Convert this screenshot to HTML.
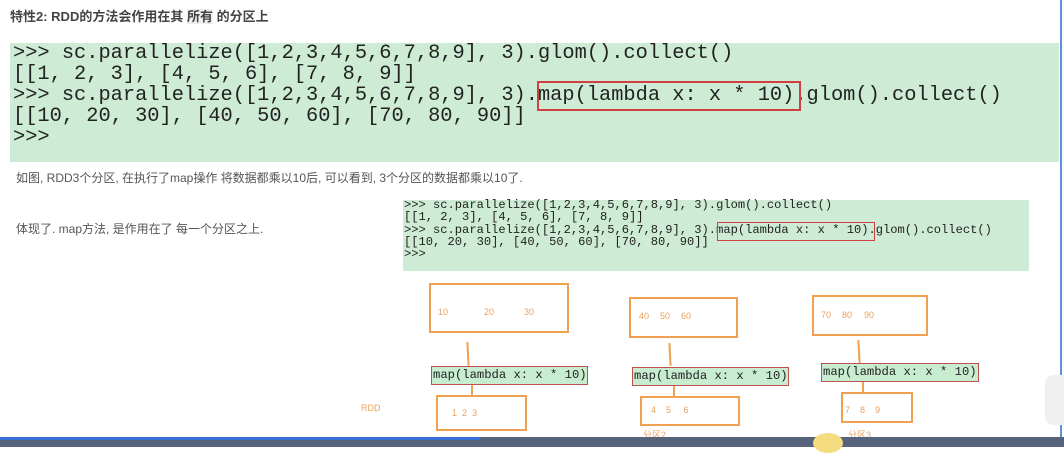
<!DOCTYPE html><html><head><meta charset="utf-8"><style>
body{margin:0;width:1064px;height:447px;background:#fff;position:relative;overflow:hidden;font-family:"Liberation Sans","Noto Sans CJK SC",sans-serif}
.a{position:absolute}
.mono{font-family:"Liberation Mono","DejaVu Sans Mono",monospace;white-space:pre;color:#222}
.ob{position:absolute;border:2px solid #f0a050;box-sizing:border-box;color:#e8a060;font-size:9px}
.mp{position:absolute;background:#c8ecd0;border:1.5px solid #c05050;font-family:"Liberation Mono",monospace;font-size:12.2px;color:#222;white-space:pre;box-sizing:border-box;line-height:16px;padding-left:1px}
.ln{position:absolute;width:2px;background:#f0a050}
.n{position:absolute;font-size:9px;color:#e8a060}
</style></head><body>
<div class="a" style="left:10px;top:6px;font-size:13px;font-weight:bold;color:#444">特性2: RDD的方法会作用在其 <span style="background:#eee">所有</span> 的分区上</div>
<div class="a" style="left:10px;top:43px;width:1049px;height:119px;background:#cdebd5"></div>
<div class="a mono" style="left:13px;top:43px;font-size:20.35px;line-height:21px">&gt;&gt;&gt; sc.parallelize([1,2,3,4,5,6,7,8,9], 3).glom().collect()
[[1, 2, 3], [4, 5, 6], [7, 8, 9]]
&gt;&gt;&gt; sc.parallelize([1,2,3,4,5,6,7,8,9], 3).map(lambda x: x * 10).glom().collect()
[[10, 20, 30], [40, 50, 60], [70, 80, 90]]
&gt;&gt;&gt;</div>
<div class="a" style="left:537px;top:81px;width:264px;height:30px;border:2px solid #d04040;box-sizing:border-box"></div>
<div class="a" style="left:16px;top:169px;font-size:12px;color:#555">如图, RDD3个分区, 在执行了map操作 将数据都乘以10后, 可以看到, 3个分区的数据都乘以10了.</div>
<div class="a" style="left:16px;top:220px;font-size:12px;color:#555">体现了. map方法, 是作用在了 每一个分区之上.</div>
<div class="a" style="left:403px;top:200px;width:626px;height:71px;background:#cdebd5"></div>
<div class="a mono" style="left:404px;top:199px;font-size:12.1px;line-height:12.3px">&gt;&gt;&gt; sc.parallelize([1,2,3,4,5,6,7,8,9], 3).glom().collect()
[[1, 2, 3], [4, 5, 6], [7, 8, 9]]
&gt;&gt;&gt; sc.parallelize([1,2,3,4,5,6,7,8,9], 3).map(lambda x: x * 10).glom().collect()
[[10, 20, 30], [40, 50, 60], [70, 80, 90]]
&gt;&gt;&gt;</div>
<div class="a" style="left:717px;top:222px;width:158px;height:19px;border:1.5px solid #d04040;box-sizing:border-box"></div>

<div class="ob" style="left:429px;top:283px;width:140px;height:50px"></div>
<span class="n" style="left:438px;top:307px">10</span><span class="n" style="left:484px;top:307px">20</span><span class="n" style="left:524px;top:307px">30</span>
<div class="ob" style="left:629px;top:297px;width:109px;height:41px"></div>
<span class="n" style="left:639px;top:311px">40</span><span class="n" style="left:660px;top:311px">50</span><span class="n" style="left:681px;top:311px">60</span>
<div class="ob" style="left:812px;top:295px;width:116px;height:41px"></div>
<span class="n" style="left:821px;top:310px">70</span><span class="n" style="left:842px;top:310px">80</span><span class="n" style="left:864px;top:310px">90</span>
<div class="ln" style="left:467px;top:342px;height:24px;transform:rotate(-3deg)"></div>
<div class="ln" style="left:669px;top:343px;height:23px;transform:rotate(-3deg)"></div>
<div class="ln" style="left:858px;top:340px;height:23px;transform:rotate(-3deg)"></div>
<div class="mp" style="left:431px;top:366px;width:157px;height:19px">map(lambda x: x * 10)</div>
<div class="mp" style="left:632px;top:367px;width:157px;height:19px">map(lambda x: x * 10)</div>
<div class="mp" style="left:821px;top:363px;width:158px;height:19px">map(lambda x: x * 10)</div>
<div class="ln" style="left:471px;top:385px;height:10px"></div>
<div class="ln" style="left:673px;top:386px;height:10px"></div>
<div class="ln" style="left:862px;top:382px;height:10px"></div>
<div class="ob" style="left:436px;top:395px;width:91px;height:36px"></div>
<span class="n" style="left:452px;top:408px">1 &nbsp;2 &nbsp;3</span>
<div class="ob" style="left:640px;top:396px;width:100px;height:30px"></div>
<span class="n" style="left:651px;top:405px">4 &nbsp; &nbsp;5 &nbsp; &nbsp; 6</span>
<div class="ob" style="left:841px;top:392px;width:72px;height:31px"></div>
<span class="n" style="left:845px;top:405px">7 &nbsp; &nbsp;8 &nbsp; &nbsp;9</span>
<div class="n" style="left:361px;top:403px">RDD</div>
<div class="n" style="left:643px;top:428px">分区2</div>
<div class="n" style="left:848px;top:428px">分区3</div>
<div class="a" style="left:1060px;top:0;width:2px;height:440px;background:#5b8fd6"></div>
<div class="a" style="left:1045px;top:375px;width:30px;height:50px;border-radius:8px;background:#f0f0f0"></div>
<div class="a" style="left:0;top:437px;width:1064px;height:10px;background:#55647c"></div>
<div class="a" style="left:0;top:437px;width:480px;height:3px;background:#3a6fd8"></div>
<div class="a" style="left:813px;top:433px;width:30px;height:20px;border-radius:50%;background:#f5dc80"></div>
</body></html>
